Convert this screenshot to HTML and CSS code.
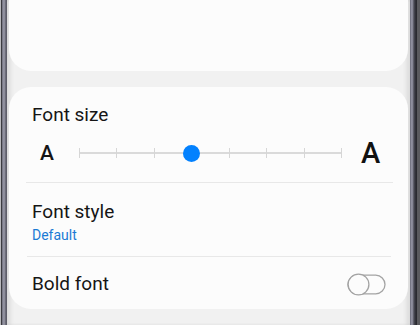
FILE: index.html
```html
<!DOCTYPE html>
<html>
<head>
<meta charset="utf-8">
<link rel="stylesheet" href="styles.css">
</head>
<body>
<div class="phone">
  <div class="bezel bezel-left"></div>
  <div class="screen">
    <div class="card card-top"></div>
    <div class="card card-main">
      <div class="row row-size">
        <div class="title">Font size</div>
        <div class="slider">
          <span class="a-small">A</span>
          <div class="track">
            <span class="tick"></span><span class="tick"></span><span class="tick"></span><span class="tick"></span><span class="tick"></span><span class="tick"></span><span class="tick"></span><span class="tick"></span>
            <span class="thumb"></span>
          </div>
          <span class="a-large">A</span>
        </div>
      </div>
      <div class="divider"></div>
      <div class="row row-style">
        <div class="title">Font style</div>
        <div class="sub">Default</div>
      </div>
      <div class="divider divider-2"></div>
      <div class="row row-bold">
        <div class="title">Bold font</div>
        <svg class="toggle" width="39" height="23" viewBox="0 0 39 23">
          <rect x="1" y="2.2" width="37" height="18.6" rx="9.3" fill="none" stroke="#a3a3a3" stroke-width="1.3"/>
          <circle cx="11.5" cy="11.5" r="10.4" fill="#fcfcfc" stroke="#a3a3a3" stroke-width="1.3"/>
        </svg>
      </div>
    </div>
  </div>
  <div class="bezel bezel-right"></div>
</div>
</body>
</html>
```
FILE: styles.css
```css
html, body {
  margin: 0;
  padding: 0;
}
body {
  width: 420px;
  height: 325px;
  overflow: hidden;
  font-family: Roboto, "Noto Sans", sans-serif;
  color: #151515;
}
.phone {
  display: flex;
  width: 420px;
  height: 325px;
}
.bezel-left {
  width: 7px;
  background: linear-gradient(to right, #b9b9bd 0, #b9b9bd 1px, #3b3b40 1px, #3b3b40 2px, #6e6e7c 2px, #9d9dab 4px, #5d5d69 6px, #5d5d69 7px);
}
.bezel-right {
  width: 10px;
  background: linear-gradient(to right, #6a6a78 0, #9b9bab 2px, #4a4a55 4px, #2a2a30 6px, #2a2a30 7px, #5a5a5e 7px, #5a5a5e 10px);
}
.screen {
  flex: 1;
  background: #f1f1f1;
  display: flex;
  flex-direction: column;
  padding: 0 2px 0 2px;
  box-shadow: inset 5px 0 5px -2px rgba(0,0,0,0.10), inset -5px 0 5px -2px rgba(0,0,0,0.10);
}
.card {
  background: #fcfcfc;
}
.card-top {
  height: 71px;
  border-radius: 0 0 22px 22px;
}
.card-main {
  margin-top: 16px;
  height: 222px;
  border-radius: 22px;
  display: flex;
  flex-direction: column;
}
.title {
  font-size: 19px;
  line-height: 22px;
  color: #151515;
}
.row-size {
  padding: 17px 0 0 23px;
  height: 78px;
}
.slider {
  display: flex;
  align-items: center;
  height: 30px;
  margin-top: 12px;
}
.a-small {
  font-size: 21px;
  font-weight: 500;
  margin-left: 8px;
  width: 39px;
  line-height: 21px;
  margin-top: 1px;
}
.track {
  position: relative;
  width: 263px;
  height: 2px;
  background: #dadada;
  display: flex;
  justify-content: space-between;
  align-items: center;
}
.tick {
  width: 1px;
  height: 10px;
  background: #d6d6d6;
}
.thumb {
  position: absolute;
  left: 104px;
  top: -7.5px;
  width: 17px;
  height: 17px;
  border-radius: 50%;
  background: #0381fe;
}
.a-large {
  font-size: 29px;
  font-weight: 500;
  margin-left: 19px;
  line-height: 29px;
  margin-top: 1px;
  color: #111;
}
.divider {
  height: 1px;
  background: #e8e8e8;
  margin: 0 15px 0 17px;
}
.divider-2 {
  margin: 0 17px 0 18px;
}
.row-style {
  height: 74px;
  padding: 18px 0 0 23px;
  box-sizing: border-box;
}
.sub {
  font-size: 14px;
  line-height: 16px;
  color: #1a7ad4;
  margin-top: 4px;
}
.row-bold {
  display: flex;
  align-items: center;
  justify-content: space-between;
  padding: 0 22px 0 23px;
  height: 50px;
  margin-top: 2px;
}
.toggle {
  display: block;
}
```
